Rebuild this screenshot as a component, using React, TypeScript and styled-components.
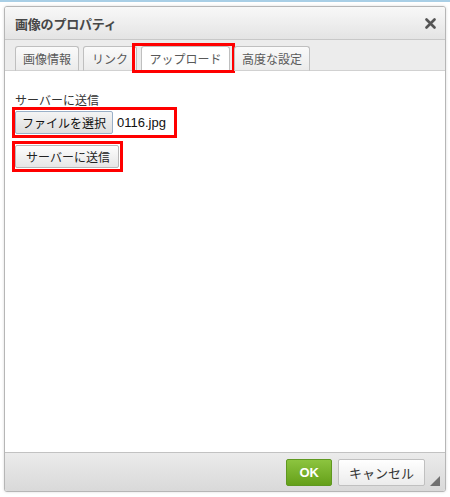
import React from "react";
import styled, { createGlobalStyle } from "styled-components";

const Global = createGlobalStyle`
  html, body { margin: 0; padding: 0; background: #ffffff; }
  body { font-family: "Noto Sans CJK JP", "Liberation Sans", sans-serif; }
  * { box-sizing: border-box; }
`;

const Page = styled.div`
  width: 450px;
  height: 497px;
  position: relative;
  overflow: hidden;
  background: #ffffff;
  border-top: 2px solid #a9cfe6;
  padding: 4px 0 0 4px;
`;

const Dialog = styled.div`
  width: 442px;
  height: 486px;
  display: flex;
  flex-direction: column;
  border: 1px solid #b6b6b6;
  border-radius: 3px;
  overflow: hidden;
  box-shadow: 0 0 3px rgba(0, 0, 0, 0.15);
  background: #ffffff;
`;

const TitleBar = styled.div`
  height: 33px;
  flex: none;
  display: flex;
  align-items: center;
  justify-content: space-between;
  padding: 1px 9px 0 10px;
  background: linear-gradient(#f8f8f8, #e4e4e4);
  border-bottom: 1px solid #c8c8c8;
`;

const Title = styled.div`
  font-size: 13px;
  font-weight: bold;
  color: #474747;
  letter-spacing: -0.2px;
`;

const Close = styled.div`
  width: 12px;
  height: 12px;
  display: flex;
  align-items: center;
  justify-content: center;
`;

const TabBar = styled.div`
  height: 31px;
  flex: none;
  display: flex;
  align-items: flex-end;
  gap: 4px;
  padding: 0 0 0 10px;
  background: #ececec;
  border-bottom: 1px solid #d1d1d1;
`;

const Tab = styled.div<{ $active?: boolean; $width: number }>`
  position: relative;
  width: ${(p) => p.$width}px;
  height: 25px;
  margin-bottom: -1px;
  display: flex;
  align-items: center;
  justify-content: center;
  font-size: 12px;
  color: #595959;
  border: 1px solid #bfbfbf;
  border-bottom: ${(p) => (p.$active ? "1px solid #ffffff" : "1px solid #d1d1d1")};
  border-radius: 3px 3px 0 0;
  background: ${(p) => (p.$active ? "#ffffff" : "linear-gradient(#fafafa, #ebebeb)")};
`;

const TabMark = styled.div`
  position: absolute;
  left: -10px;
  right: -6px;
  top: -4px;
  bottom: -3px;
  border: 3px solid #ff0000;
  pointer-events: none;
`;

const Body = styled.div`
  flex: 1;
  background: #ffffff;
  padding: 22px 7px 0 7px;
  display: flex;
  flex-direction: column;
  align-items: flex-start;
`;

const Label = styled.div`
  font-size: 12px;
  color: #333333;
  line-height: 14px;
  padding-left: 3px;
`;

const RedBox = styled.div<{ $tight?: boolean }>`
  display: inline-flex;
  align-items: center;
  border: 3px solid #ff0000;
  padding: ${(p) => (p.$tight ? "1px 1px 1px 0" : "1px 3px 1px 0")};
  margin-top: ${(p) => (p.$tight ? "3px" : "0")};
  gap: 4px;
`;

const FileButton = styled.div`
  height: 23px;
  padding: 0 6px;
  display: flex;
  align-items: center;
  font-size: 12px;
  color: #111111;
  border: 1px solid #9ab0c8;
  border-radius: 2px;
  background: linear-gradient(#f4f4f4, #dedede);
`;

const FileName = styled.span`
  font-family: "Liberation Sans", Arial, sans-serif;
  font-size: 13px;
  color: #111111;
  padding-right: 5px;
`;

const SendButton = styled.div`
  height: 23px;
  padding: 0 8px 0 10px;
  display: flex;
  align-items: center;
  font-size: 12px;
  color: #222222;
  border: 1px solid #b8b8b8;
  border-radius: 2px;
  background: linear-gradient(#fdfdfd, #e6e6e6);
`;

const Footer = styled.div`
  height: 39px;
  flex: none;
  display: flex;
  align-items: center;
  justify-content: flex-end;
  gap: 6px;
  padding: 0 20px 0 0;
  border-top: 1px solid #c2c2c2;
  background: linear-gradient(#ebebeb, #d9d9d9);
  position: relative;
`;

const Button = styled.div<{ $primary?: boolean }>`
  height: 27px;
  padding: 0 ${(p) => (p.$primary ? "12px" : "10px")};
  display: flex;
  align-items: center;
  font-size: 13px;
  font-weight: ${(p) => (p.$primary ? "bold" : "normal")};
  color: ${(p) => (p.$primary ? "#ffffff" : "#333333")};
  font-family: ${(p) => (p.$primary ? '"Liberation Sans", Arial, sans-serif' : "inherit")};
  border: 1px solid ${(p) => (p.$primary ? "#5f9820" : "#c0c0c0")};
  border-radius: 2px;
  background: ${(p) => (p.$primary ? "linear-gradient(#8cc43f, #65a01a)" : "linear-gradient(#ffffff, #ececec)")};
`;

const Grip = styled.div`
  position: absolute;
  right: 5px;
  bottom: 5px;
  width: 0;
  height: 0;
  border-left: 10px solid transparent;
  border-bottom: 10px solid #555555;
  opacity: 0.8;
`;

export default function App() {
  return (
    <>
      <Global />
      <Page>
        <Dialog>
          <TitleBar>
            <Title>画像のプロパティ</Title>
            <Close>
              <svg width="11" height="11" viewBox="0 0 11 11">
                <path d="M1.5 1.5 L9.5 9.5 M9.5 1.5 L1.5 9.5" stroke="#555" strokeWidth="2.6" strokeLinecap="round" />
              </svg>
            </Close>
          </TitleBar>
          <TabBar>
            <Tab $width={64}>画像情報</Tab>
            <Tab $width={54}>リンク</Tab>
            <Tab $width={89} $active>
              アップロード
              <TabMark />
            </Tab>
            <Tab $width={76}>高度な設定</Tab>
          </TabBar>
          <Body>
            <Label>サーバーに送信</Label>
            <RedBox>
              <FileButton>ファイルを選択</FileButton>
              <FileName>0116.jpg</FileName>
            </RedBox>
            <RedBox $tight>
              <SendButton>サーバーに送信</SendButton>
            </RedBox>
          </Body>
          <Footer>
            <Button $primary>OK</Button>
            <Button>キャンセル</Button>
            <Grip />
          </Footer>
        </Dialog>
      </Page>
    </>
  );
}
